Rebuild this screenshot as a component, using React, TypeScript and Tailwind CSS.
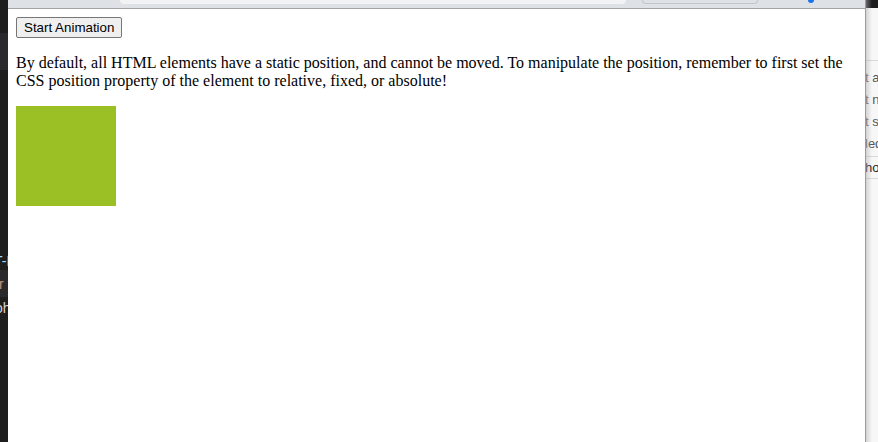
import React from "react";

function LeftStrip() {
  return (
    <div className="flex w-[8px] shrink-0 flex-col overflow-hidden bg-[#1e1e1e] font-['Liberation_Sans',sans-serif] text-[14px] leading-[22px]">
      <div className="h-[33px]" />
      <div className="h-[37px] bg-[#2a2a2d]" />
      <div className="h-[182px]" />
      <div className="flex h-[18px] items-center whitespace-nowrap text-[#9cdcfe]">
        <span className="-ml-[6px]">T-F</span>
      </div>
      <div className="flex h-[27px] items-center whitespace-nowrap bg-[#2a2a2d] text-[#ce9178]">
        <span className="-ml-[5px]">tr</span>
      </div>
      <div className="flex h-[22px] items-center whitespace-nowrap text-[#d4d4d4]">
        <span className="-ml-[5px]">oh</span>
      </div>
    </div>
  );
}

function RightStrip() {
  const rows = ["t a", "t n", "t se", "led"];
  return (
    <div className="relative flex w-[12px] shrink-0 flex-col overflow-hidden bg-[#f7f7f7] font-['Liberation_Sans',sans-serif] text-[13px]">
      <div className="h-[8px] bg-[#1e1e1e]" />
      <div className="h-[52px]" />
      <div className="border-t border-[#d8d8d8]" />
      <div className="flex flex-col pt-[6px]">
        {rows.map((row) => (
          <div key={row} className="flex h-[22px] items-center whitespace-nowrap text-[#555]">
            <span className="-ml-[1px]">{row}</span>
          </div>
        ))}
      </div>
      <div className="mt-[1px] border-t border-[#d8d8d8]" />
      <div className="flex h-[21px] items-center whitespace-nowrap text-[#222]">
        <span className="-ml-[1px]">ho</span>
      </div>
      <div className="border-t border-[#d8d8d8]" />
      <div className="pointer-events-none absolute inset-y-0 left-0 w-[6px] bg-gradient-to-r from-[#b0b0b0] to-transparent opacity-50" />
    </div>
  );
}

function Chrome() {
  return (
    <div className="flex h-[9px] shrink-0 items-start border-b border-[#a3a3a3] bg-[#dee1e6]">
      <div className="w-[112px]" />
      <div className="h-[4px] w-[506px] rounded-b-[8px] bg-[#f1f3f4]" />
      <div className="w-[16px]" />
      <div className="h-[4px] w-[116px] rounded-b-[8px] border border-t-0 border-[#c3c5c9]" />
      <div className="w-[50px]" />
      <div className="h-[3px] w-[6px] rounded-b-[3px] bg-[#1a73e8]" />
    </div>
  );
}

export default function App() {
  return (
    <div className="flex h-[442px] w-[878px] overflow-hidden bg-white">
      <LeftStrip />
      <div className="flex w-[858px] shrink-0 flex-col border-r border-[#9b9b9b]">
        <Chrome />
        <div className="flex-1 bg-white p-[8px]">
          <button className="block h-[21px] rounded-[2px] border border-[#767676] bg-[#efefef] px-[7px] font-['Liberation_Sans',sans-serif] text-[13.33px] leading-none text-black">
            Start Animation
          </button>
          <p className="my-[16px] font-['Liberation_Serif',serif] text-[16px] leading-[18px] text-black">
            By default, all HTML elements have a static position, and cannot be moved. To manipulate the position, remember to first set the CSS position property of the element to relative, fixed, or absolute!
          </p>
          <div className="h-[100px] w-[100px] bg-[#9ac025]" />
        </div>
      </div>
      <RightStrip />
    </div>
  );
}
